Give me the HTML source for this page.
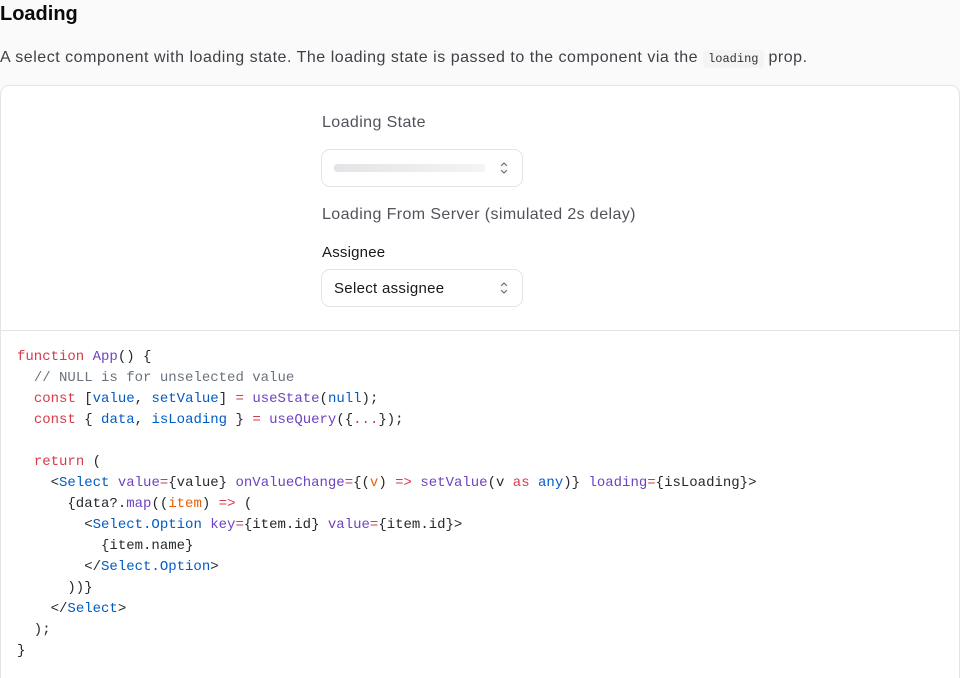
<!DOCTYPE html>
<html><head><style>
html,body{margin:0;width:960px;height:678px;overflow:hidden}
body{background:#fafafa;font-family:"Liberation Sans",sans-serif;position:relative;color:#111}
h1{position:absolute;left:0;top:3px;margin:0;font-size:20px;font-weight:bold;color:#0a0a0a}
p.d{position:absolute;left:0;top:49px;margin:0;font-size:16px;color:#3f3f46;letter-spacing:0.52px;white-space:nowrap}
p.d code{font-family:"Liberation Mono",monospace;font-size:12px;background:#f4f4f5;padding:2px 5px;border-radius:4px;color:#333;letter-spacing:0}
.card{position:absolute;left:0;top:85px;width:958px;height:620px;border:1px solid #e4e4e7;border-radius:9px;background:#fff}
.top{height:244px;border-bottom:1px solid #e4e4e7;position:relative}
.lbl{position:absolute;left:321px;font-size:16px;color:#52525b;letter-spacing:0.4px;white-space:nowrap}
.sel{position:absolute;left:320px;width:200px;height:36px;border:1px solid #e4e4e7;border-radius:9px;background:#fff}
.sk{position:absolute;left:12px;top:14px;width:151px;height:8px;border-radius:3px;background:linear-gradient(90deg,#e4e4e7,#f4f4f5)}
.chev{position:absolute;right:13px;top:11px}
.code{position:absolute;left:16px;top:261px;font-family:"Liberation Mono",monospace;font-size:14px;line-height:21px;white-space:pre;color:#24292e}
.k{color:#d73a49}.f{color:#6f42c1}.b{color:#005cc5}.c{color:#6a737d}.o{color:#e36209}
</style></head><body>
<h1>Loading</h1>
<p class="d">A select component with loading state. The loading state is passed to the component via the <code>loading</code> prop.</p>
<div class="card">
<div class="top">
<div class="lbl" style="top:28px">Loading State</div>
<div class="sel" style="top:63px"><div class="sk"></div><svg class="chev" width="10" height="14" viewBox="0 0 10 14"><path d="M2 5l3-3 3 3M2 9l3 3 3-3" fill="none" stroke="#71717a" stroke-width="1.2"/></svg></div>
<div class="lbl" style="top:120px">Loading From Server (simulated 2s delay)</div>
<div class="lbl" style="top:158px;font-size:15px;color:#18181b;letter-spacing:0.2px">Assignee</div>
<div class="sel" style="top:183px"><span style="position:absolute;left:12px;top:10px;font-size:15px;color:#18181b;letter-spacing:0.3px">Select assignee</span><svg class="chev" width="10" height="14" viewBox="0 0 10 14"><path d="M2 5l3-3 3 3M2 9l3 3 3-3" fill="none" stroke="#71717a" stroke-width="1.2"/></svg></div>
</div>
<div class="code"><span class="k">function</span> <span class="f">App</span>() {
  <span class="c">// NULL is for unselected value</span>
  <span class="k">const</span> [<span class="b">value</span>, <span class="b">setValue</span>] <span class="k">=</span> <span class="f">useState</span>(<span class="b">null</span>);
  <span class="k">const</span> { <span class="b">data</span>, <span class="b">isLoading</span> } <span class="k">=</span> <span class="f">useQuery</span>({<span class="k">...</span>});

  <span class="k">return</span> (
    &lt;<span class="b">Select</span> <span class="f">value</span><span class="k">=</span>{value} <span class="f">onValueChange</span><span class="k">=</span>{(<span class="o">v</span>) <span class="k">=&gt;</span> <span class="f">setValue</span>(v <span class="k">as</span> <span class="b">any</span>)} <span class="f">loading</span><span class="k">=</span>{isLoading}&gt;
      {data?.<span class="f">map</span>((<span class="o">item</span>) <span class="k">=&gt;</span> (
        &lt;<span class="b">Select.Option</span> <span class="f">key</span><span class="k">=</span>{item.id} <span class="f">value</span><span class="k">=</span>{item.id}&gt;
          {item.name}
        &lt;/<span class="b">Select.Option</span>&gt;
      ))}
    &lt;/<span class="b">Select</span>&gt;
  );
}</div>
</div>
</body></html>
